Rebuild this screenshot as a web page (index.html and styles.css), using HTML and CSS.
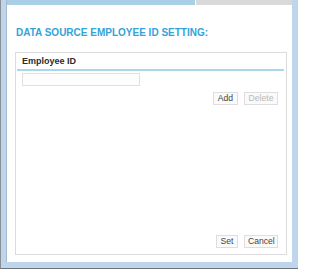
FILE: index.html
```html
<!DOCTYPE html>
<html>
<head>
<meta charset="utf-8">
<link rel="stylesheet" href="styles.css">
</head>
<body>
<div class="frame">
  <div class="window">
    <div class="tabs">
      <div class="tab-active"></div>
      <div class="tab-rest"></div>
    </div>
    <h1 class="title">DATA SOURCE EMPLOYEE ID SETTING:</h1>
    <div class="panel">
      <div class="panel-head">Employee ID</div>
      <input class="id-input" type="text">
      <div class="row-actions">
        <button class="btn btn-add">Add</button>
        <button class="btn btn-delete" disabled>Delete</button>
      </div>
      <div class="footer-actions">
        <button class="btn btn-set">Set</button>
        <button class="btn btn-cancel">Cancel</button>
      </div>
    </div>
  </div>
</div>
</body>
</html>
```

FILE: styles.css
```css
html, body {
  margin: 0;
  padding: 0;
  background: #ffffff;
}

.frame {
  width: 298px;
  height: 269px;
  box-sizing: border-box;
  background: #bfd5eb;
  border-left: 1px solid #8a8f96;
  border-bottom: 1px solid #6f747a;
  padding: 0 6px 6px 5px;
  display: flex;
}

.window {
  flex: 1;
  background: #ffffff;
  border-left: 1px solid #a7bad0;
  display: flex;
  flex-direction: column;
  font-family: "Liberation Sans", Arial, sans-serif;
}

.tabs {
  display: flex;
  height: 5px;
  gap: 1px;
}

.tab-active {
  width: 188px;
  background: #a9cfe7;
}

.tab-rest {
  flex: 1;
  background: #d9d9d9;
}

.title {
  margin: 22px 0 0 9px;
  font-size: 10px;
  line-height: 12px;
  font-weight: bold;
  color: #35a2d8;
}

.panel {
  margin: 13px 5px 7px 8px;
  flex: 1;
  border: 1px solid #dcdcdc;
  display: flex;
  flex-direction: column;
  padding-top: 3px;
}

.panel-head {
  margin: 0 2px 0 1px;
  padding: 0 0 2px 5px;
  border-bottom: 2px solid #a8d8ea;
  font-size: 9px;
  line-height: 11px;
  font-weight: bold;
  color: #2b2b2b;
}

.id-input {
  margin: 2px 0 0 6px;
  width: 118px;
  height: 13px;
  box-sizing: border-box;
  border: 1px solid #e0e0e0;
  background: #fdfdfd;
  padding: 0;
}

.row-actions,
.footer-actions {
  display: flex;
  justify-content: flex-end;
  gap: 6px;
  margin-right: 8px;
}

.row-actions {
  margin-top: 6px;
}

.footer-actions {
  margin-top: auto;
  margin-bottom: 6px;
}

.btn {
  height: 13px;
  box-sizing: border-box;
  padding: 0 3px;
  border: 1px solid #dedede;
  background: #fafafa;
  font-family: "Liberation Sans", Arial, sans-serif;
  font-size: 8.6px;
  line-height: 11px;
  color: #444444;
  border-radius: 0;
}

.btn-add { width: 25px; }
.btn-delete { width: 34px; color: #b9b9b9; }
.btn-set { width: 22px; }
.btn-cancel { width: 34px; }
```
